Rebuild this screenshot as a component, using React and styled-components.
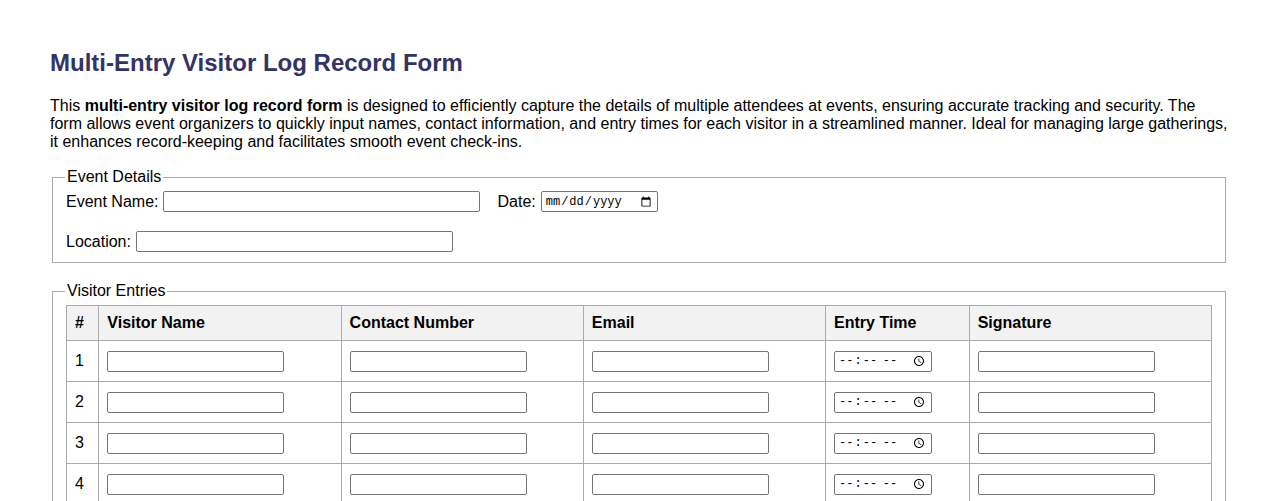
import styled, { createGlobalStyle } from 'styled-components';

const GlobalStyle = createGlobalStyle`
  body {
    margin: 0;
    background: #fff;
    font-family: "Liberation Sans", Arial, sans-serif;
    color: #000;
  }
`;

const Page = styled.div`
  padding: 33px 50px 20px;
`;

const Title = styled.h1`
  font-size: 24px;
  color: #333366;
  margin: 16px 0;
`;

const Intro = styled.p`
  font-size: 16px;
  margin: 20px 0 17px;
`;

const Group = styled.fieldset`
  margin: 0 2px 19px;
  padding: 0 13px 10px;
  border: 1px solid #aaa;
  font-size: 16px;

  legend {
    padding: 0 2px;
    margin-left: -1px;
  }
`;

const Row = styled.div`
  display: flex;
  align-items: center;
  gap: 17px;
  margin-bottom: 19px;

  &:first-of-type {
    margin-top: 5px;
  }

  &:last-child {
    margin-bottom: 0;
  }
`;

const Field = styled.label`
  display: flex;
  align-items: center;
  gap: 5px;
`;

const TextInput = styled.input`
  width: ${(p) => p.$w || 177}px;
  height: 21px;
  box-sizing: border-box;
  border: 1px solid #767676;
  border-radius: 2px;
  padding: 1px 2px;
  font-size: 13px;
  vertical-align: middle;
`;

const StampInput = styled.input`
  width: ${(p) => p.$w}px;
  height: 21px;
  box-sizing: border-box;
  border: 1px solid #767676;
  border-radius: 2px;
  padding: 1px 3px;
  font-family: "Liberation Mono", "DejaVu Sans Mono", monospace;
  font-size: 12px;
  vertical-align: middle;
`;

const Table = styled.table`
  width: 100%;
  border-collapse: collapse;
  margin-top: 5px;

  th,
  td {
    border: 1px solid #aaa;
    padding: 8px;
    text-align: left;
    font-size: 16px;
  }

  th {
    background: #f2f2f2;
    font-weight: bold;
  }

  td {
    height: 24px;
  }
`;

const rows = [1, 2, 3, 4, 5];

const App = () => (
  <>
    <GlobalStyle />
    <Page>
      <Title>Multi-Entry Visitor Log Record Form</Title>
      <Intro>
        This <b>multi-entry visitor log record form</b> is designed to efficiently capture the details of
        multiple attendees at events, ensuring accurate tracking and security. The form allows event
        organizers to quickly input names, contact information, and entry times for each visitor in a
        streamlined manner. Ideal for managing large gatherings, it enhances record-keeping and
        facilitates smooth event check-ins.
      </Intro>

      <Group>
        <legend>Event Details</legend>
        <Row>
          <Field>
            Event Name: <TextInput type="text" $w={317} />
          </Field>
          <Field>
            Date: <StampInput type="date" $w={117} />
          </Field>
        </Row>
        <Row>
          <Field>
            Location: <TextInput type="text" $w={317} />
          </Field>
        </Row>
      </Group>

      <Group>
        <legend>Visitor Entries</legend>
        <Table>
          <thead>
            <tr>
              <th>#</th>
              <th>Visitor Name</th>
              <th>Contact Number</th>
              <th>Email</th>
              <th>Entry Time</th>
              <th>Signature</th>
            </tr>
          </thead>
          <tbody>
            {rows.map((n) => (
              <tr key={n}>
                <td>{n}</td>
                <td><TextInput type="text" /></td>
                <td><TextInput type="tel" /></td>
                <td><TextInput type="email" /></td>
                <td><StampInput type="time" $w={98} /></td>
                <td><TextInput type="text" /></td>
              </tr>
            ))}
          </tbody>
        </Table>
      </Group>
    </Page>
  </>
);

export default App;
